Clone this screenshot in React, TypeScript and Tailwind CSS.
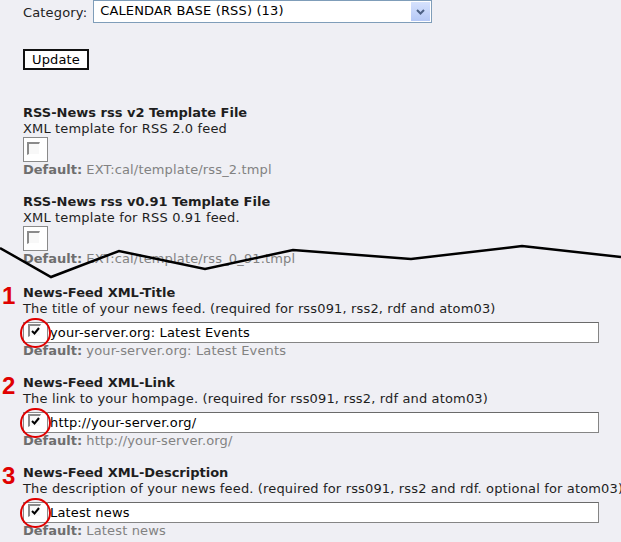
import React from "react";

const font = "font-['DejaVu_Sans','Verdana',sans-serif]";

function CheckMark() {
  return (
    <svg width="9" height="8" viewBox="0 0 9 8" className="block">
      <path d="M1 4 L3.5 6.5 L8 1" fill="none" stroke="#000" strokeWidth="2" />
    </svg>
  );
}

function InnerBox({ checked }: { checked?: boolean }) {
  return (
    <div className="w-[13px] h-[13px] bg-[#f8f8f8] border-t-2 border-l-2 border-t-[#8a8a8a] border-l-[#8a8a8a] border-b border-r border-b-white border-r-white flex items-center justify-center">
      {checked ? <CheckMark /> : null}
    </div>
  );
}

function DefaultLine({ value }: { value: string }) {
  return (
    <div className="leading-4 whitespace-nowrap">
      <span className="font-bold text-[#6e6e6e]">Default:</span>{" "}
      <span className="text-[#828282] tracking-[0.15px]">{value}</span>
    </div>
  );
}

function TemplateItem({
  title,
  desc,
  def,
  className,
}: {
  title: string;
  desc: string;
  def: string;
  className?: string;
}) {
  return (
    <div className={"pl-[23px] " + (className ?? "")}>
      <div className="leading-4 font-bold text-[#1e1e1e] whitespace-nowrap">{title}</div>
      <div className="leading-4 text-[#1e1e1e] whitespace-nowrap tracking-[0.15px]">{desc}</div>
      <div className="w-[25px] h-[25px] border border-[#8a8a8a] bg-white pl-[3px] pt-[4px]">
        <InnerBox />
      </div>
      <DefaultLine value={def} />
    </div>
  );
}

function NumberedItem({
  num,
  title,
  desc,
  value,
  className,
}: {
  num: string;
  title: string;
  desc: string;
  value: string;
  className?: string;
}) {
  return (
    <div className={"flex items-start " + (className ?? "")}>
      <div className="w-[23px] shrink-0 pl-[2px] -mt-[2px] font-['Liberation_Sans',Arial,sans-serif] font-bold text-[24px] leading-[25px] text-[#e00000]">
        {num}
      </div>
      <div>
        <div className="leading-4 font-bold text-[#1e1e1e] whitespace-nowrap">{title}</div>
        <div className="leading-4 text-[#1e1e1e] whitespace-nowrap tracking-[0.15px]">{desc}</div>
        <div className="mt-[5px] flex h-[21px]">
          <div className="relative w-[25px] h-[21px] border border-[#8a8a8a] bg-white pl-[4px] pt-[1px]">
            <InnerBox checked />
            <div className="absolute -left-[4px] -top-[5px] w-[31px] h-[30px] rounded-full border-2 border-[#e00000]" />
          </div>
          <div className="-ml-px w-[552px] h-[21px] bg-white border border-[#858585] border-t-[#6a6a6a] pl-[2px] leading-[19px] text-black whitespace-nowrap tracking-[0.15px]">
            {value}
          </div>
        </div>
        <DefaultLine value={value} />
      </div>
    </div>
  );
}

export default function App() {
  return (
    <div className={`${font} relative w-full h-[542px] overflow-hidden bg-[#efeff4] text-[13px] text-[#1e1e1e]`}>
      {/* Category row */}
      <div className="flex items-center h-[23px] pl-[23px]">
        <span className="leading-4 mt-[2px] text-[#222] tracking-[0.15px]">Category:</span>
        <div className="ml-[6px] w-[339px] h-[23px] border border-[#7f9db9] bg-white flex items-center">
          <span className="flex-1 pl-[6px] leading-4 -mt-[2px] text-black whitespace-nowrap tracking-[0.15px]">
            CALENDAR BASE (RSS) (13)
          </span>
          <div className="w-[19px] h-[19px] mr-px bg-gradient-to-b from-[#d6e2fd] to-[#b5c8f6] flex items-center justify-center">
            <svg width="9" height="6" viewBox="0 0 9 6">
              <path d="M1 1 L4.5 4.5 L8 1" fill="none" stroke="#4d6185" strokeWidth="2" />
            </svg>
          </div>
        </div>
      </div>

      {/* Update button */}
      <div className="pl-[23px] mt-[26px]">
        <div className="w-[66px] h-[21px] border-2 border-[#111] bg-white flex items-center justify-center leading-4 text-black tracking-[0.15px]">
          Update
        </div>
      </div>

      <TemplateItem
        className="mt-[35px]"
        title="RSS-News rss v2 Template File"
        desc="XML template for RSS 2.0 feed"
        def="EXT:cal/template/rss_2.tmpl"
      />
      <TemplateItem
        className="mt-[16px]"
        title="RSS-News rss v0.91 Template File"
        desc="XML template for RSS 0.91 feed."
        def="EXT:cal/template/rss_0_91.tmpl"
      />

      <NumberedItem
        className="mt-[18px]"
        num="1"
        title="News-Feed XML-Title"
        desc="The title of your news feed. (required for rss091, rss2, rdf and atom03)"
        value="your-server.org: Latest Events"
      />
      <NumberedItem
        className="mt-[16px]"
        num="2"
        title="News-Feed XML-Link"
        desc="The link to your hompage. (required for rss091, rss2, rdf and atom03)"
        value="http://your-server.org/"
      />
      <NumberedItem
        className="mt-[16px]"
        num="3"
        title="News-Feed XML-Description"
        desc="The description of your news feed. (required for rss091, rss2 and rdf. optional for atom03)"
        value="Latest news"
      />

      {/* zig-zag cut line overlay */}
      <svg
        className="absolute left-0 top-0 pointer-events-none"
        width="621"
        height="542"
        viewBox="0 0 621 542"
      >
        <polyline
          points="0,248 51,277 119,251 205,269 293,250 411,259 522,246 621,257"
          fill="none"
          stroke="#000"
          strokeWidth="2.5"
          strokeLinejoin="miter"
        />
      </svg>
    </div>
  );
}
